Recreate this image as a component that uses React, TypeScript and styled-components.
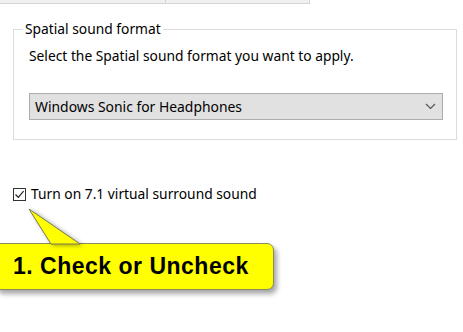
import styled, { createGlobalStyle } from "styled-components";

const GlobalStyle = createGlobalStyle`
  html, body {
    margin: 0;
    padding: 0;
    background: #ffffff;
  }
  body {
    font-family: "Noto Sans", "Open Sans", sans-serif;
    color: #000000;
  }
`;

export default function App() {
  return (
    <>
      <GlobalStyle />
      <Page>
        <TabStrip>
          <TabEdge $width={166} />
          <TabEdge $width={144} />
        </TabStrip>

        <Group>
          <Legend>Spatial sound format</Legend>
          <Hint>Select the Spatial sound format you want to apply.</Hint>
          <Select>
            <span>Windows Sonic for Headphones</span>
            <svg width="11" height="7" viewBox="0 0 11 7">
              <path d="M1 1 L5.5 5.5 L10 1" fill="none" stroke="#555" strokeWidth="1.2" />
            </svg>
          </Select>
        </Group>

        <CheckRow>
          <Box>
            <svg width="11" height="11" viewBox="0 0 11 11">
              <path d="M1.5 5.5 L4.3 8.3 L9.6 2.2" fill="none" stroke="#222" strokeWidth="1.2" />
            </svg>
          </Box>
          <CheckLabel>Turn on 7.1 virtual surround sound</CheckLabel>
        </CheckRow>

        <Callout>
          <Pointer width="60" height="38" viewBox="0 0 60 38">
            <polygon points="2,1 24,36 53,36" fill="#ffff00" stroke="#7a7a50" strokeWidth="1" />
          </Pointer>
          <CalloutBody>1. Check or Uncheck</CalloutBody>
        </Callout>
      </Page>
    </>
  );
}

const Page = styled.div`
  position: relative;
  width: 463px;
  height: 332px;
  overflow: hidden;
`;

const TabStrip = styled.div`
  display: flex;
  height: 3px;
`;

const TabEdge = styled.div<{ $width: number }>`
  width: ${(p) => p.$width}px;
  background: #f0f0f0;
  border-bottom: 1px solid #d5d5d5;
  border-right: 1px solid #d5d5d5;
  box-sizing: border-box;
  height: 4px;
`;

const Group = styled.fieldset`
  margin: 16px 0 0 13px;
  width: 444px;
  box-sizing: border-box;
  height: 121px;
  border: 1px solid #dcdcdc;
  padding: 0 13px 0 15px;
`;

const Legend = styled.legend`
  font-size: 13.8px;
  line-height: 20px;
  padding: 0 2px;
  margin-left: -6px;
  color: #000;
`;

const Hint = styled.div`
  font-size: 13.8px;
  line-height: 20px;
  margin-top: 7px;
`;

const Select = styled.div`
  margin-top: 27px;
  height: 27px;
  box-sizing: border-box;
  background: #e1e1e1;
  border: 1px solid #adadad;
  display: flex;
  align-items: center;
  justify-content: space-between;
  padding: 0 6px 0 5px;
  font-size: 13.9px;
  color: #000;
`;

const CheckRow = styled.div`
  display: flex;
  align-items: center;
  gap: 5px;
  margin: 45px 0 0 13px;
`;

const Box = styled.div`
  width: 13px;
  height: 13px;
  box-sizing: border-box;
  border: 1px solid #333;
  background: #fff;
  display: flex;
  align-items: center;
  justify-content: center;
`;

const CheckLabel = styled.span`
  font-size: 13.8px;
  line-height: 18px;
`;

const Callout = styled.div`
  position: absolute;
  left: -6px;
  top: 208px;
  width: 280px;
`;

const Pointer = styled.svg`
  position: absolute;
  left: 33px;
  top: 0;
  z-index: 2;
  filter: drop-shadow(2px 1px 2px rgba(0, 0, 0, 0.35));
`;

const CalloutBody = styled.div`
  position: relative;
  margin-top: 35px;
  height: 47px;
  box-sizing: border-box;
  background: #ffff00;
  border: 1px solid #8a8a5a;
  border-radius: 7px;
  box-shadow: 3px 4px 5px rgba(0, 0, 0, 0.35);
  font-family: "Liberation Sans", Arial, sans-serif;
  font-weight: bold;
  font-size: 23px;
  letter-spacing: 0.5px;
  display: flex;
  align-items: center;
  padding-left: 18px;
  color: #000;
`;
